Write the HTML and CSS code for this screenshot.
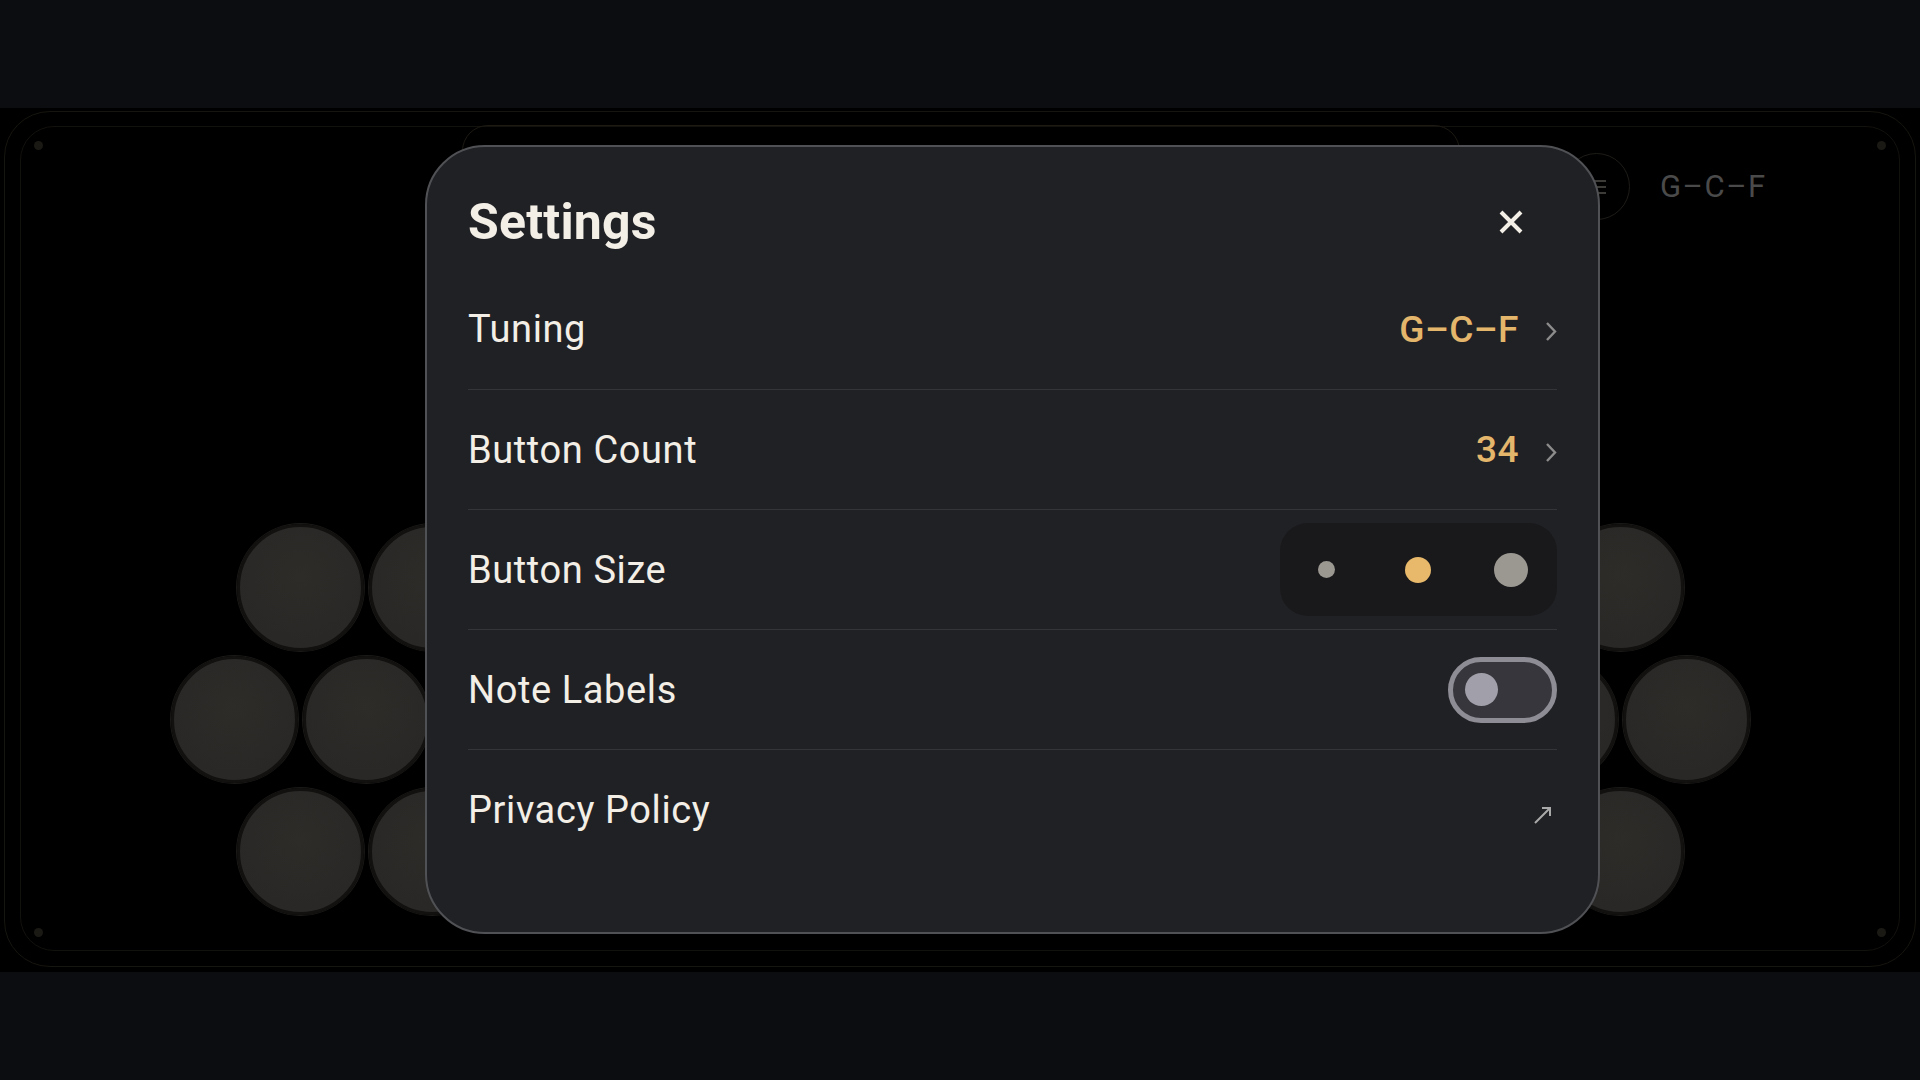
FILE: index.html
```html
<!DOCTYPE html>
<html lang="en">
<head>
  <meta charset="UTF-8" />
  <meta name="viewport" content="width=device-width, initial-scale=1.0"/>
  <title>Concertina</title>
  <link rel="stylesheet" href="styles.css">
</head>
<body>
  <div class="band"></div>

  <div class="screen">
    <div class="frame">
      <div class="frame-inner">
        <span class="screw tl"></span>
        <span class="screw tr"></span>
        <span class="screw bl"></span>
        <span class="screw br"></span>

        <div class="header">
          <div class="topbar"></div>
          <button class="menu-btn">
            <svg width="22" height="22" viewBox="0 0 22 22"><path d="M8 5h12M8 11h12M8 17h12" stroke="#3d3b37" stroke-width="2" fill="none"/><circle cx="3" cy="11" r="5" stroke="#3d3b37" stroke-width="2" fill="none"/></svg>
          </button>
          <div class="tuning-tag">G–C–F</div>
        </div>

        <div class="keyboard" id="keyboard"></div>
      </div>
    </div>
  </div>

  <div class="band"></div>

  <div class="modal">
    <div class="modal-head">
      <h1 class="modal-title">Settings</h1>
      <button class="close-btn">
        <svg width="24" height="24" viewBox="0 0 24 24"><path d="M2 2L22 22M22 2L2 22" stroke="#f3efe7" stroke-width="4" fill="none"/></svg>
      </button>
    </div>

    <div class="row">
      <span class="row-label">Tuning</span>
      <span class="row-value">G–C–F</span>
      <svg class="chevron" width="12" height="22" viewBox="0 0 12 22"><path d="M2 3l8 8.5-8 8.5" stroke="#8c8c8c" stroke-width="2.4" fill="none"/></svg>
    </div>

    <div class="row">
      <span class="row-label">Button Count</span>
      <span class="row-value">34</span>
      <svg class="chevron" width="12" height="22" viewBox="0 0 12 22"><path d="M2 3l8 8.5-8 8.5" stroke="#8c8c8c" stroke-width="2.4" fill="none"/></svg>
    </div>

    <div class="row">
      <span class="row-label">Button Size</span>
      <div class="size-picker">
        <span class="size-opt"><span class="dot dot-s"></span></span>
        <span class="size-opt active"><span class="dot dot-m"></span></span>
        <span class="size-opt"><span class="dot dot-l"></span></span>
      </div>
    </div>

    <div class="row">
      <span class="row-label">Note Labels</span>
      <span class="switch"><span class="knob"></span></span>
    </div>

    <div class="row">
      <span class="row-label">Privacy Policy</span>
      <svg class="ext-icon" width="20" height="20" viewBox="0 0 20 20"><path d="M2 18L17 3M9 3h8v8" stroke="#a9a9a9" stroke-width="2" fill="none"/></svg>
    </div>
  </div>

  <script>
    // 11 / 12 / 11 layout = 34 buttons
    const keyboard = document.getElementById("keyboard");
    [11, 12, 11].forEach(count => {
      const row = document.createElement("div");
      row.className = "key-row";
      for (let i = 0; i < count; i++) {
        const key = document.createElement("span");
        key.className = "key";
        row.appendChild(key);
      }
      keyboard.appendChild(row);
    });
  </script>
</body>
</html>
```

FILE: styles.css
```css
:root {
  --band: #0b0d10;
  --screen: #000;
  --frame-line: #17150f;
  --modal: #202125;
  --modal-border: #505155;
  --divider: #333539;
  --text: #f3efe7;
  --gold: #e4b66c;
  --muted: #8c8c8c;
}

* { margin: 0; padding: 0; box-sizing: border-box; }

body {
  font-family: Roboto, 'Noto Sans', sans-serif;
  background: var(--band);
  color: var(--text);
  width: 1920px;
  height: 1080px;
  overflow: hidden;
}

.band { height: 108px; background: var(--band); }

/* the instrument screen behind the dialog */
.screen {
  height: 864px;
  background: var(--screen);
  padding: 3px 4px 5px;
}

.frame {
  height: 100%;
  border: 1px solid var(--frame-line);
  border-radius: 46px;
  padding: 14px 15px 15px;
}

.frame-inner {
  position: relative;
  height: 100%;
  border: 1px solid #13110d;
  border-radius: 34px;
  display: flex;
  flex-direction: column;
}

.screw {
  position: absolute;
  width: 9px;
  height: 9px;
  border-radius: 50%;
  background: #1b1913;
}
.screw.tl { left: 13px; top: 14px; }
.screw.tr { right: 13px; top: 14px; }
.screw.bl { left: 13px; bottom: 13px; }
.screw.br { right: 13px; bottom: 13px; }

.header {
  display: flex;
  align-items: flex-start;
}

.topbar {
  width: 998px;
  height: 96px;
  margin-left: 441px;
  margin-top: -2px;
  border: 1px solid #1d1a13;
  border-radius: 26px;
}

.menu-btn {
  width: 67px;
  height: 67px;
  margin-left: 103px;
  margin-top: 26px;
  border-radius: 50%;
  border: 1px solid #1e1c18;
  background: transparent;
  display: flex;
  align-items: center;
  justify-content: center;
}

.tuning-tag {
  margin-left: 30px;
  margin-top: 44px;
  font-size: 31px;
  line-height: 1;
  letter-spacing: 1.5px;
  color: #4a4a4a;
}

.keyboard {
  margin-top: auto;
  padding-bottom: 35px;
  display: flex;
  flex-direction: column;
  gap: 5px;
}

.key-row {
  display: flex;
  justify-content: center;
  gap: 5px;
}

.key {
  width: 127px;
  height: 127px;
  border-radius: 50%;
  background: radial-gradient(circle at 50% 40%, #2e2c29, #292826 70%);
  border: 3px solid #121110;
  box-shadow: 0 0 0 1px #1a1917, 0 2px 8px rgba(0, 0, 0, 0.7);
}

/* settings dialog */
.modal {
  position: absolute;
  left: 425px;
  top: 145px;
  width: 1175px;
  background: var(--modal);
  border: 2px solid var(--modal-border);
  border-radius: 60px;
  padding: 0 41px 63px;
}

.modal-head {
  height: 122px;
  padding-top: 28px;
  display: flex;
  align-items: center;
  justify-content: space-between;
}

.modal-title {
  font-size: 50px;
  font-weight: 700;
  line-height: 1;
  letter-spacing: 0.2px;
}

.close-btn {
  width: 48px;
  height: 48px;
  margin-right: 22px;
  background: none;
  border: none;
  display: flex;
  align-items: center;
  justify-content: center;
}

.row {
  height: 120px;
  display: flex;
  align-items: center;
}
.row + .row { border-top: 1px solid var(--divider); }

.row-label {
  flex: 1;
  font-size: 38px;
  letter-spacing: 0.6px;
}

.row-value {
  font-size: 37px;
  font-weight: 500;
  letter-spacing: 0.5px;
  color: var(--gold);
}

.chevron { margin-left: 26px; margin-top: 4px; }

.size-picker {
  width: 277px;
  height: 93px;
  border-radius: 28px;
  background: #19191b;
  display: flex;
}

.size-opt {
  flex: 1;
  display: flex;
  align-items: center;
  justify-content: center;
}

.dot { border-radius: 50%; background: #9b9791; }
.dot-s { width: 17px; height: 17px; }
.dot-m { width: 26px; height: 26px; }
.dot-l { width: 34px; height: 34px; }
.size-opt.active .dot { background: #e8b96b; }

.switch {
  width: 109px;
  height: 66px;
  border-radius: 33px;
  border: 5px solid #8e8c95;
  background: #37363c;
  display: flex;
  align-items: center;
  padding-left: 12px;
}

.knob {
  width: 33px;
  height: 33px;
  border-radius: 50%;
  background: #a19fa9;
}

.ext-icon { margin-right: 4px; margin-top: 10px; }
```
